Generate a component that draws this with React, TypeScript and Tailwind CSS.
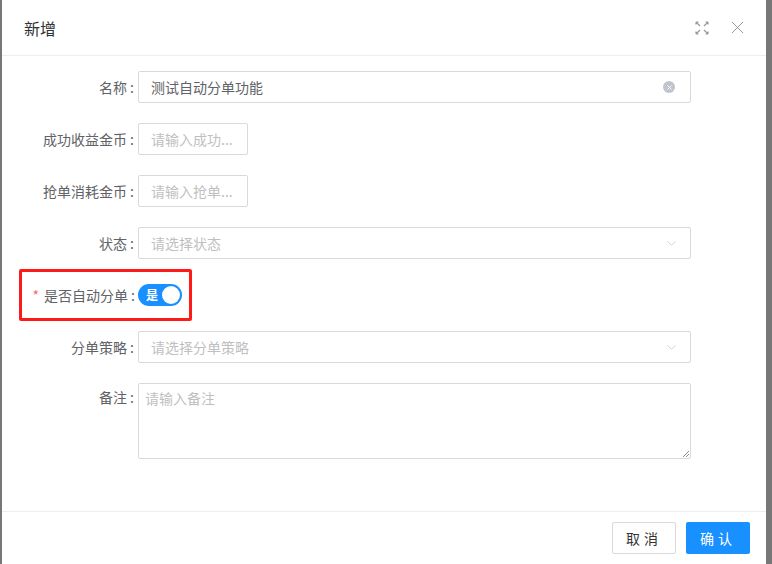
import { ChevronDown, X } from 'lucide-react'

const font = { fontFamily: '"Noto Sans CJK SC", "Noto Sans", sans-serif' }

const Label = ({ text }: { text: string }) => (
  <div className="w-[136px] shrink-0 pr-[4px] text-right text-[14px] text-[#606266]">
    {text}
    <span className="ml-[3px]">:</span>
  </div>
)

const Field = ({ placeholder, value, wide, clear, select }: { placeholder?: string; value?: string; wide?: boolean; clear?: boolean; select?: boolean }) => (
  <div className={`flex h-[32px] items-center rounded-[2px] border border-[#d9d9d9] bg-white pl-[12px] pr-[14px] text-[14px] ${wide ? 'w-[553px]' : 'w-[110px]'}`}>
    <span className={`flex-1 truncate ${value ? 'text-[#606266]' : 'text-[#bfbfbf]'}`}>{value || placeholder}</span>
    {clear && (
      <span className="mr-[1px] flex h-[12px] w-[12px] items-center justify-center rounded-full bg-[#c0c4cc]">
        <X size={7} strokeWidth={3} className="text-white" />
      </span>
    )}
    {select && <ChevronDown size={15} strokeWidth={1.2} className="-mr-[3px] text-[#c0c4cc]" />}
  </div>
)

const FullscreenIcon = () => (
  <svg width="14" height="14" viewBox="0 0 14 14" fill="none" stroke="#999" strokeWidth="1.2">
    <path d="M1 1 L5 5 M1 1 L1 3.5 M1 1 L3.5 1" />
    <path d="M13 1 L9 5 M13 1 L13 3.5 M13 1 L10.5 1" />
    <path d="M1 13 L5 9 M1 13 L1 10.5 M1 13 L3.5 13" />
    <path d="M13 13 L9 9 M13 13 L13 10.5 M13 13 L10.5 13" />
  </svg>
)

export default function App() {
  return (
    <div className="flex h-[564px] w-[772px] overflow-hidden bg-[#777]" style={font}>
      <div className="ml-[2px] flex w-[764px] flex-col bg-white">
        <header className="flex h-[56px] shrink-0 items-center justify-between border-b border-[#ebeef5] pl-[22px] pr-[18px]">
          <span className="text-[16px] text-[#303133]">新增</span>
          <div className="flex items-center gap-[18px]">
            <FullscreenIcon />
            <X size={21} strokeWidth={1.1} className="text-[#909399]" />
          </div>
        </header>

        <div className="flex flex-1 flex-col gap-[20px] pt-[15px]">
          <div className="flex items-center">
            <Label text="名称" />
            <Field wide value="测试自动分单功能" clear />
          </div>
          <div className="flex items-center">
            <Label text="成功收益金币" />
            <Field placeholder="请输入成功..." />
          </div>
          <div className="flex items-center">
            <Label text="抢单消耗金币" />
            <Field placeholder="请输入抢单..." />
          </div>
          <div className="flex items-center">
            <Label text="状态" />
            <Field wide select placeholder="请选择状态" />
          </div>
          <div className="-my-[10px] ml-[17px] flex h-[52px] w-[173px] items-center rounded-[2px] border-[3px] border-[#ff1a1a]">
            <div className="w-[116px] shrink-0 pr-[3px] text-right text-[14px] text-[#606266]">
              <span className="mr-[5px] text-[#f56c6c]">*</span>是否自动分单<span className="ml-[3px]">:</span>
            </div>
            <div className="flex h-[22px] w-[44px] items-center justify-between rounded-full bg-[#1890ff] pl-[8px] pr-[2px]">
              <span className="text-[12px] font-semibold text-white">是</span>
              <span className="h-[18px] w-[18px] rounded-full bg-white" />
            </div>
          </div>
          <div className="flex items-center">
            <Label text="分单策略" />
            <Field wide select placeholder="请选择分单策略" />
          </div>
          <div className="flex items-start">
            <div className="w-[136px] shrink-0 pr-[4px] pt-[4px] text-right text-[14px] text-[#606266]">
              备注<span className="ml-[3px]">:</span>
            </div>
            <div className="relative h-[76px] w-[553px] rounded-[2px] border border-[#d9d9d9] px-[6px] py-[4px] text-[14px] text-[#bfbfbf]">
              请输入备注
              <svg className="absolute bottom-[1px] right-[1px]" width="7" height="7" viewBox="0 0 7 7" stroke="#888" strokeWidth="1">
                <path d="M1 7 L7 1 M4 7 L7 4" />
              </svg>
            </div>
          </div>
        </div>

        <footer className="flex h-[53px] shrink-0 items-center justify-end gap-[10px] border-t border-[#ebeef5] pr-[16px]">
          <button className="h-[32px] w-[64px] rounded-[2px] border border-[#d9d9d9] bg-white text-[14px] tracking-[4px] text-[#333]">
            取消
          </button>
          <button className="h-[32px] w-[64px] rounded-[2px] bg-[#1890ff] text-[14px] tracking-[4px] text-white">
            确认
          </button>
        </footer>
      </div>
    </div>
  )
}
